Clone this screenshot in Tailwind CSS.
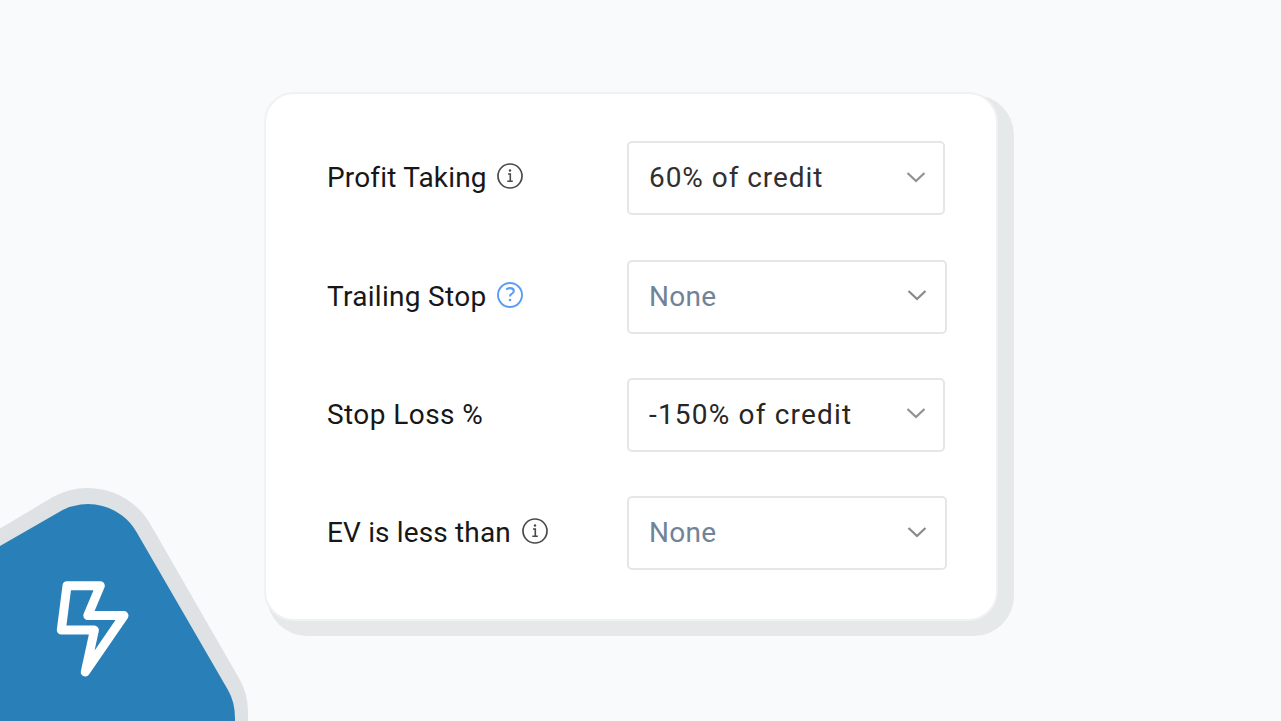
<!DOCTYPE html>
<html lang="en">
<head>
<meta charset="utf-8">
<title>Exit settings</title>
<script src="https://cdn.jsdelivr.net/npm/@tailwindcss/browser@4"></script>
</head>
<body class="relative h-[721px] w-[1281px] overflow-hidden bg-[#f9fafc] font-['Roboto',sans-serif] text-[28px] leading-[36px] text-[#171717]">
<main class="flex pt-[95px] pl-[267px]">
  <div class="flex h-[541px] w-[747px] items-start rounded-[40px] bg-[#e5e9ea]">
    <section class="-mt-[3px] -ml-[3px] h-[529px] w-[734px] rounded-[30px] border-2 border-[#f0f1f2] bg-white pt-[47px] pl-[61px]">
      <div class="mb-[45px] flex h-[74px] items-center">
        <div class="flex w-[300px] items-center gap-[11px]">
          <span class="w-[159px] whitespace-nowrap tracking-[0.17px]">Profit Taking</span>
          <svg class="-mt-1 size-[26px] text-[#4a4a4a]" viewBox="0 0 26 26" fill="none" stroke="currentColor"><circle cx="13" cy="13" r="12" stroke-width="1.7"/><path d="M11 11h2.3v7M10.3 18.3h5.5" stroke-width="1.6"/><circle cx="13" cy="7.5" r="1.2" fill="currentColor" stroke="none"/></svg>
        </div>
        <div class="flex h-[74px] w-[318px] items-center justify-between rounded-[5px] border-2 border-[#e5e6e7] pr-[17px] pl-[20px] text-[#303030]">
          <span class="whitespace-nowrap tracking-[0.95px]">60% of credit</span>
          <svg class="-mt-0.5 h-3 w-5" viewBox="0 0 20 12" fill="none" stroke="#929292" stroke-width="2.3"><path d="M1.5 2l8.5 8 8.5-8"/></svg>
        </div>
      </div>
      <div class="mb-[44px] flex h-[74px] items-center">
        <div class="flex w-[300px] items-center gap-[11px]">
          <span class="w-[159px] whitespace-nowrap tracking-[0.3px]">Trailing Stop</span>
          <svg class="-mt-1 size-[26px] text-[#5b9df5]" viewBox="0 0 26 26" fill="none" stroke="currentColor"><circle cx="13" cy="13" r="12" stroke-width="1.9"/><path d="M9.2 7.5c1-1 2.3-1.4 3.8-1.4 2.3 0 3.8 1 3.8 3s-1.3 2.5-2.6 3.1c-.9.4-1.2.9-1.2 2.3" stroke-width="2.1"/><circle cx="13" cy="18" r="1.3" fill="currentColor" stroke="none"/></svg>
        </div>
        <div class="flex h-[74px] w-[320px] items-center justify-between rounded-[5px] border-2 border-[#e5e6e7] pr-[18px] pl-[20px] text-[#708398]">
          <span class="whitespace-nowrap tracking-[0.3px]">None</span>
          <svg class="-mt-1 h-3 w-5" viewBox="0 0 20 12" fill="none" stroke="#8b8b8b" stroke-width="2.3"><path d="M1.5 2l8.5 8 8.5-8"/></svg>
        </div>
      </div>
      <div class="mb-[44px] flex h-[74px] items-center">
        <div class="flex w-[300px] items-center">
          <span class="whitespace-nowrap tracking-[0.42px]">Stop Loss %</span>
        </div>
        <div class="flex h-[74px] w-[318px] items-center justify-between rounded-[5px] border-2 border-[#e5e6e7] pr-[17px] pl-[20px] text-[#262626]">
          <span class="whitespace-nowrap tracking-[1.18px]">-150% of credit</span>
          <svg class="-mt-1 h-3 w-5" viewBox="0 0 20 12" fill="none" stroke="#929292" stroke-width="2.3"><path d="M1.5 2l8.5 8 8.5-8"/></svg>
        </div>
      </div>
      <div class="flex h-[74px] items-center">
        <div class="flex w-[300px] items-center gap-[11px]">
          <span class="w-[184px] whitespace-nowrap tracking-[0.15px]">EV is less than</span>
          <svg class="-mt-1 size-[26px] text-[#4a4a4a]" viewBox="0 0 26 26" fill="none" stroke="currentColor"><circle cx="13" cy="13" r="12" stroke-width="1.7"/><path d="M11 11h2.3v7M10.3 18.3h5.5" stroke-width="1.6"/><circle cx="13" cy="7.5" r="1.2" fill="currentColor" stroke="none"/></svg>
        </div>
        <div class="flex h-[74px] w-[320px] items-center justify-between rounded-[5px] border-2 border-[#e5e6e7] pr-[18px] pl-[20px] text-[#708398]">
          <span class="whitespace-nowrap tracking-[0.3px]">None</span>
          <svg class="-mt-0.5 h-3 w-5" viewBox="0 0 20 12" fill="none" stroke="#8b8b8b" stroke-width="2.3"><path d="M1.5 2l8.5 8 8.5-8"/></svg>
        </div>
      </div>
    </section>
  </div>
</main>
<svg class="absolute bottom-0 left-0 h-[241px] w-[260px]" viewBox="0 480 260 241" fill="none">
  <path fill="#dfe2e4" d="M0 528.5L52 497.6A72 72 0 0 1 150.3 524L240 680Q248 694 248 713V721H0Z"/>
  <path fill="#2980b9" d="M0 546L60 511.5A56 56 0 0 1 136.5 532L228 690Q235 702 235 718V721H0Z"/>
  <path stroke="#fff" stroke-width="9" stroke-linejoin="round" d="M67 585.7H100.3L87.8 615.6H124L85.3 672L94.4 630.1H61.3Z"/>
</svg>
</body>
</html>
